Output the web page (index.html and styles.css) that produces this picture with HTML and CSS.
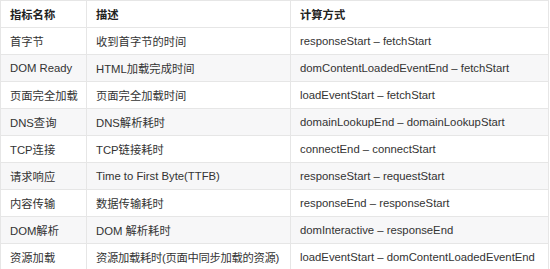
FILE: index.html
```html
<!DOCTYPE html>
<html lang="zh-CN">
<head>
    <meta charset="UTF-8">
    <title>性能指标</title>
    <link rel="stylesheet" href="styles.css">
</head>
<body>
    <table class="metrics">
        <colgroup>
            <col class="col-name">
            <col class="col-desc">
            <col class="col-calc">
        </colgroup>
        <thead>
            <tr>
                <th>指标名称</th>
                <th>描述</th>
                <th>计算方式</th>
            </tr>
        </thead>
        <tbody>
            <tr><td>首字节</td><td>收到首字节的时间</td><td>responseStart – fetchStart</td></tr>
            <tr><td>DOM Ready</td><td>HTML加载完成时间</td><td>domContentLoadedEventEnd – fetchStart</td></tr>
            <tr><td>页面完全加载</td><td>页面完全加载时间</td><td>loadEventStart – fetchStart</td></tr>
            <tr><td>DNS查询</td><td>DNS解析耗时</td><td>domainLookupEnd – domainLookupStart</td></tr>
            <tr><td>TCP连接</td><td>TCP链接耗时</td><td>connectEnd – connectStart</td></tr>
            <tr><td>请求响应</td><td>Time to First Byte(TTFB)</td><td>responseStart – requestStart</td></tr>
            <tr><td>内容传输</td><td>数据传输耗时</td><td>responseEnd – responseStart</td></tr>
            <tr><td>DOM解析</td><td>DOM 解析耗时</td><td>domInteractive – responseEnd</td></tr>
            <tr><td>资源加载</td><td class="tight">资源加载耗时(页面中同步加载的资源)</td><td>loadEventStart – domContentLoadedEventEnd</td></tr>
        </tbody>
    </table>
</body>
</html>
```

FILE: styles.css
```css
body {
    margin: 0;
    background-color: #fff;
    font-family: "Liberation Sans", Arial, "Noto Sans CJK SC", sans-serif;
    font-size: 11.3px;
    color: #333;
}
.metrics {
    border-collapse: collapse;
    table-layout: fixed;
    width: 549px;
}
.col-name {
    width: 86px;
}
.col-desc {
    width: 204px;
}
.metrics th,
.metrics td {
    border: 1px solid #e6e6e6;
    padding: 0 9px;
    height: 26px;
    text-align: left;
    white-space: nowrap;
    overflow: hidden;
}
.metrics td.tight {
    padding-right: 0;
    letter-spacing: -0.3px;
}
.metrics th {
    font-weight: bold;
    color: #222;
}
.metrics tbody tr:nth-child(even) {
    background-color: #f7f7f8;
}
```
